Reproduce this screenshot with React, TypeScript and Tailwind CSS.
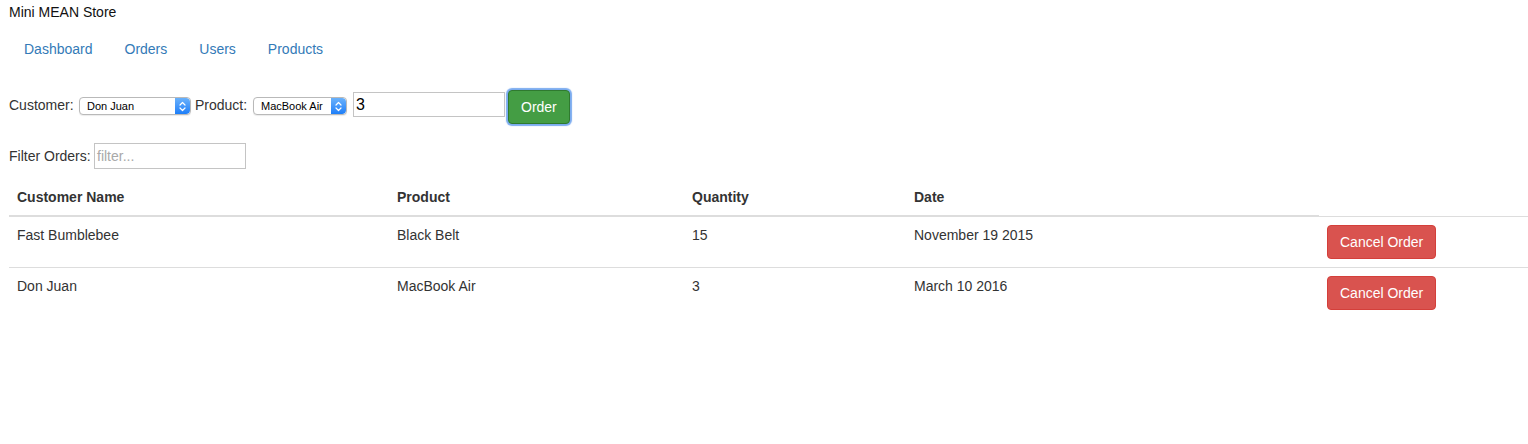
import React from "react";

function Stepper() {
  return (
    <div className="flex h-full w-[15px] items-center justify-center rounded-r-[4px] bg-gradient-to-b from-[#69b1fb] to-[#1b7ef8]">
      <svg width="7" height="11" viewBox="0 0 7 11" fill="none">
        <path d="M1 4 L3.5 1.5 L6 4" stroke="white" strokeWidth="1.2" strokeLinecap="round" strokeLinejoin="round" />
        <path d="M1 7 L3.5 9.5 L6 7" stroke="white" strokeWidth="1.2" strokeLinecap="round" strokeLinejoin="round" />
      </svg>
    </div>
  );
}

function FakeSelect({ value, width }: { value: string; width: string }) {
  return (
    <div
      className={`${width} mt-[8px] flex h-[18px] items-stretch overflow-hidden rounded-[4px] border border-[#b9b9b9] bg-white shadow-[0_1px_1px_rgba(0,0,0,0.08)]`}
    >
      <div className="flex flex-1 items-center pl-[7px] text-[11px] leading-none text-black">{value}</div>
      <Stepper />
    </div>
  );
}

export default function App() {
  const rows = [
    { name: "Fast Bumblebee", product: "Black Belt", qty: "15", date: "November 19 2015" },
    { name: "Don Juan", product: "MacBook Air", qty: "3", date: "March 10 2016" },
  ];
  return (
    <div className="min-h-[444px] bg-white pl-[9px] text-[14px] text-[#333] [font-family:'Liberation_Sans',Arial,sans-serif]">
      <div className="pt-[2px] leading-[20px] text-[#111]">Mini MEAN Store</div>

      <nav className="mt-[7px] flex">
        {["Dashboard", "Orders", "Users", "Products"].map((l, i) => (
          <a
            key={l}
            href="#"
            className={`${i > 0 ? "ml-[2px]" : ""} rounded-[4px] px-[15px] py-[10px] leading-[20px] text-[#337ab7]`}
          >
            {l}
          </a>
        ))}
      </nav>

      <div className="mt-[20px] flex items-start">
        <label className="mt-[6px] w-[70px] leading-[20px]">Customer:</label>
        <FakeSelect value="Don Juan" width="w-[112px]" />
        <label className="ml-[4px] mt-[6px] w-[58px] leading-[20px]">Product:</label>
        <FakeSelect value="MacBook Air" width="w-[94px]" />
        <div className="ml-[6px] mt-[3px] flex h-[25px] w-[152px] items-center border border-[#c4c4c4] bg-white pl-[2px] text-[16px] text-black">
          3
        </div>
        <button className="ml-[3px] mt-[1px] h-[34px] rounded-[4px] border border-[#2f7a2f] bg-[#449d44] px-[12px] leading-[20px] text-white shadow-[0_0_1px_2px_rgba(90,150,235,0.8)]">
          Order
        </button>
      </div>

      <div className="mt-[19px] flex h-[26px] items-center">
        <label className="w-[85px] leading-[20px]">Filter Orders:</label>
        <div className="flex h-[26px] w-[152px] items-center border border-[#c4c4c4] bg-white pl-[2px] text-[14px] text-[#a9a9a9]">
          filter...
        </div>
      </div>

      <table className="mt-[10px] w-[1519px] table-fixed border-collapse">
        <colgroup>
          <col className="w-[380px]" />
          <col className="w-[295px]" />
          <col className="w-[222px]" />
          <col className="w-[413px]" />
          <col className="w-[209px]" />
        </colgroup>
        <thead>
          <tr>
            {["Customer Name", "Product", "Quantity", "Date"].map((h) => (
              <th key={h} className="border-b-2 border-[#ddd] p-[8px] text-left align-bottom font-bold leading-[20px]">
                {h}
              </th>
            ))}
          </tr>
        </thead>
        <tbody>
          {rows.map((r) => (
            <tr key={r.name}>
              <td className="border-t border-[#ddd] p-[8px] align-top leading-[20px]">{r.name}</td>
              <td className="border-t border-[#ddd] p-[8px] align-top leading-[20px]">{r.product}</td>
              <td className="border-t border-[#ddd] p-[8px] align-top leading-[20px]">{r.qty}</td>
              <td className="border-t border-[#ddd] p-[8px] align-top leading-[20px]">{r.date}</td>
              <td className="border-t border-[#ddd] p-[8px] align-top leading-[20px]">
                <button className="h-[34px] rounded-[4px] border border-[#d43f3a] bg-[#d9534f] px-[12px] leading-[20px] text-white">
                  Cancel Order
                </button>
              </td>
            </tr>
          ))}
        </tbody>
      </table>
    </div>
  );
}
